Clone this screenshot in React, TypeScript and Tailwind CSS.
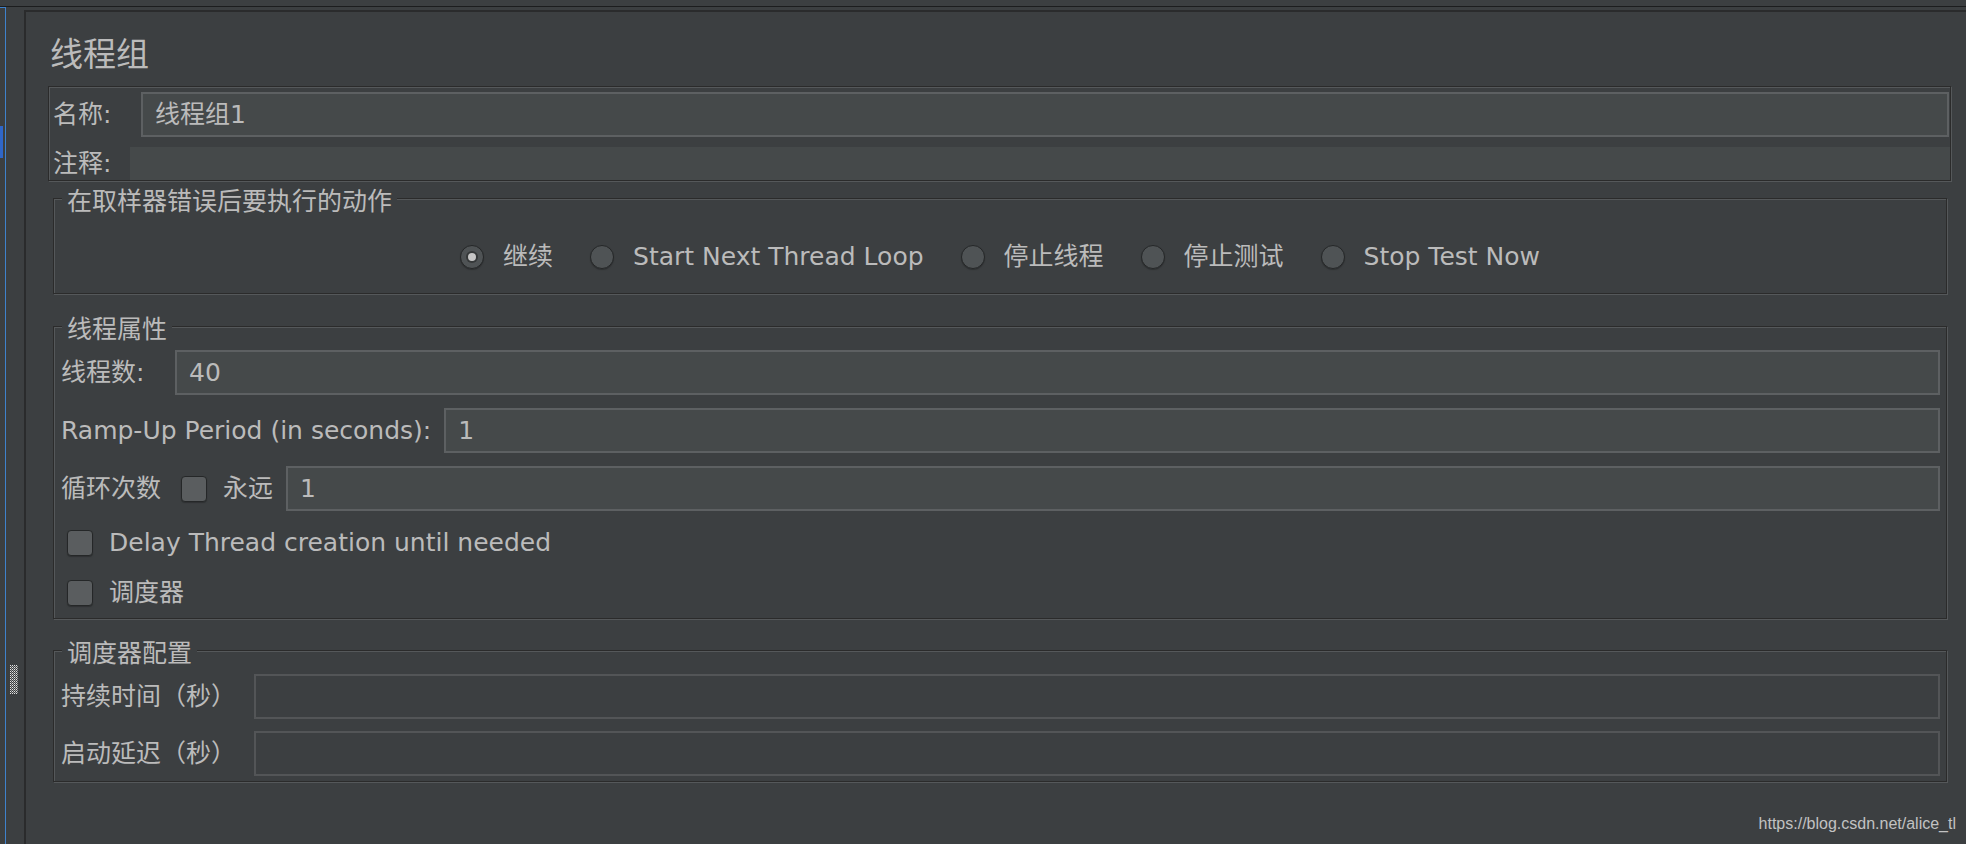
import React from 'react';

const Field: React.FC<{ value?: string; disabled?: boolean; className?: string }> = ({ value, disabled, className = '' }) => (
  <div
    className={`flex h-[45px] flex-1 items-center border-2 pl-[12px] ${
      disabled ? 'border-[#535557] bg-[#3c3f41]' : 'border-[#5d6062] bg-[#45494a]'
    } ${className}`}
  >
    {value}
  </div>
);

const Radio: React.FC<{ label: string; checked?: boolean }> = ({ label, checked }) => (
  <div className="flex items-center gap-[19px]">
    <span className="flex h-[24px] w-[24px] items-center justify-center rounded-full border border-[#252728] bg-[#4f5355] shadow-[0_1px_1px_#2e3032]">
      {checked && <span className="h-[8px] w-[8px] rounded-full bg-[#c6c6c6] ring-2 ring-[#353839]" />}
    </span>
    <span>{label}</span>
  </div>
);

const Checkbox: React.FC = () => (
  <span className="block h-[26px] w-[26px] rounded-[4px] border border-[#252728] bg-[#5a5d5f] shadow-[0_1px_1px_#2e3032]" />
);

const Group: React.FC<{ title: string; className?: string; children: React.ReactNode }> = ({ title, className = '', children }) => (
  <div className={`relative ml-[5px] mr-[4px] border border-[#2b2b2b] shadow-[inset_1px_1px_0_#55585a,1px_1px_0_#55585a] ${className}`}>
    <span className="absolute -top-[10px] left-[8px] bg-[#3c3f41] px-[5px] leading-[25px]">{title}</span>
    {children}
  </div>
);

// dotted grip on the splitter
const Grip: React.FC = () => {
  const dots: { x: number; y: number }[] = [];
  for (let y = 0; y < 29; y++) {
    for (let x = 0; x < 8; x++) {
      if ((x + y) % 2 === 0) dots.push({ x, y });
    }
  }
  return (
    <svg width="8" height="29" viewBox="0 0 8 29" shapeRendering="crispEdges">
      {dots.map((d, i) => (
        <rect key={i} x={d.x} y={d.y} width="1" height="1" fill={d.y % 2 === 0 ? '#e2e2e2' : '#9a9a9a'} />
      ))}
    </svg>
  );
};

const App: React.FC = () => {
  return (
    <div className="relative flex h-[844px] w-[1966px] flex-col overflow-hidden bg-[#3c3f41] font-['DejaVu_Sans','Noto_Sans_CJK_SC',sans-serif] text-[25px] text-[#bbbbbb]">
      <div className="h-[6px]" />
      <div className="h-px bg-[#1c1d1e]" />

      <div className="flex min-h-0 flex-1">
        {/* left tree edge */}
        <div className="flex w-[24px]">
          <div className="h-full w-[6px] border-t border-r border-[#3f82cc]">
            <div className="mt-[118px] h-[32px] w-[3px] bg-[#2f66c8]" />
          </div>
          <div className="flex flex-1 flex-col pl-[4px] pt-[658px]">
            <Grip />
          </div>
        </div>

        {/* main panel */}
        <div className="mt-[3px] flex flex-1 flex-col border-t-2 border-l-2 border-[#2a2b2c] pl-[22px] pr-[15px]">
          <h1 className="ml-[2px] mt-[23px] text-[33px] leading-[40px]">线程组</h1>

          <div className="mt-[11px] flex flex-col border border-[#2b2b2b] shadow-[inset_1px_1px_0_#55585a,1px_1px_0_#55585a]">
            <div className="mt-[5px] flex items-center pl-[4px] pr-px">
              <span className="w-[88px]">名称:</span>
              <Field value="线程组1" />
            </div>
            <div className="mt-[10px] flex h-[33px] items-center pl-[4px]">
              <span className="w-[77px]">注释:</span>
              <div className="h-full flex-1 bg-[#45494a]" />
            </div>
          </div>

          <Group title="在取样器错误后要执行的动作" className="mt-[17px] pt-[44px] pb-[22px]">
            <div className="flex h-[28px] items-center justify-center gap-[37px]">
              <Radio label="继续" checked />
              <Radio label="Start Next Thread Loop" />
              <Radio label="停止线程" />
              <Radio label="停止测试" />
              <Radio label="Stop Test Now" />
            </div>
          </Group>

          <Group title="线程属性" className="mt-[32px] pt-[23px] pl-[7px] pr-[6px]">
            <div className="flex items-center">
              <span className="w-[114px]">线程数:</span>
              <Field value="40" />
            </div>
            <div className="mt-[13px] flex items-center">
              <span className="mr-[13px]">Ramp-Up Period (in seconds):</span>
              <Field value="1" />
            </div>
            <div className="mt-[13px] flex items-center">
              <span className="mr-[20px]">循环次数</span>
              <Checkbox />
              <span className="ml-[16px] mr-[13px]">永远</span>
              <Field value="1" />
            </div>
            <div className="mt-[7px] flex h-[50px] items-center gap-[16px] pl-[6px]">
              <Checkbox />
              <span>Delay Thread creation until needed</span>
            </div>
            <div className="flex h-[50px] items-center gap-[16px] pl-[6px]">
              <Checkbox />
              <span>调度器</span>
            </div>
          </Group>

          <Group title="调度器配置" className="mt-[31px] pt-[23px] pb-[5px] pl-[7px] pr-[6px]">
            <div className="flex items-center">
              <span className="w-[193px]">持续时间（秒）</span>
              <Field disabled />
            </div>
            <div className="mt-[12px] flex items-center">
              <span className="w-[193px]">启动延迟（秒）</span>
              <Field disabled />
            </div>
          </Group>
        </div>
      </div>

      <span className="absolute bottom-[11px] right-[10px] font-['Liberation_Sans',sans-serif] text-[16px] leading-[18px] text-[#c2c2c2]">
        https://blog.csdn.net/alice_tl
      </span>
    </div>
  );
};

export default App;
